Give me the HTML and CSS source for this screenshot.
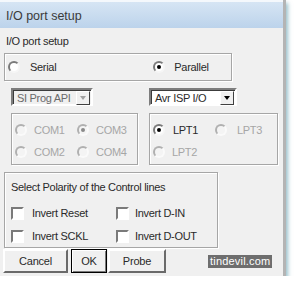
FILE: index.html
```html
<!DOCTYPE html>
<html lang="en">
<head>
  <meta charset="UTF-8" />
  <title>I/O port setup</title>
  <link rel="stylesheet" href="styles.css">
</head>
<body>
  <div class="window">
    <div class="titlebar">I/O port setup</div>

    <div class="label">I/O port setup</div>

    <div class="group mode">
      <label class="opt serial"><span class="radio"></span>Serial</label>
      <label class="opt parallel"><span class="radio on"></span>Parallel</label>
    </div>

    <div class="combos">
      <div class="combo disabled combo-prog">
        <span class="combo-text">SI Prog API</span>
        <span class="combo-btn"><span class="arrow"></span></span>
      </div>
      <div class="combo combo-isp">
        <span class="combo-text">Avr ISP I/O</span>
        <span class="combo-btn"><span class="arrow"></span></span>
      </div>
    </div>

    <div class="ports">
      <div class="group port-grid disabled">
        <label class="opt"><span class="radio"></span>COM1</label>
        <label class="opt"><span class="radio on"></span>COM3</label>
        <label class="opt"><span class="radio"></span>COM2</label>
        <label class="opt"><span class="radio"></span>COM4</label>
      </div>
      <div class="group port-grid lpt">
        <label class="opt"><span class="radio on"></span>LPT1</label>
        <label class="opt dim"><span class="radio"></span>LPT3</label>
        <label class="opt dim"><span class="radio"></span>LPT2</label>
      </div>
    </div>

    <div class="group polarity">
      <div class="polarity-title">Select Polarity of the Control lines</div>
      <div class="checks">
        <label class="chk"><span class="box"></span>Invert Reset</label>
        <label class="chk"><span class="box"></span>Invert D-IN</label>
        <label class="chk"><span class="box"></span>Invert SCKL</label>
        <label class="chk"><span class="box"></span>Invert D-OUT</label>
      </div>
    </div>

    <div class="buttons">
      <button class="btn cancel">Cancel</button>
      <button class="btn ok">OK</button>
      <button class="btn probe">Probe</button>
      <span class="watermark">tindevil.com</span>
    </div>
  </div>
</body>
</html>
```

FILE: styles.css
```css
* { box-sizing: border-box; }
body {
  margin: 0;
  background: #fff;
  font-family: "Liberation Sans", Arial, sans-serif;
  font-size: 11px;
  letter-spacing: -0.3px;
  color: #2a2a2a;
}
.window {
  width: 286px; height: 276px;
  background: #f0f0f0;
  border-right: 3px solid #b4b4b4;
  box-shadow: 2px 3px 4px rgba(70, 140, 160, 0.55);
  display: flex; flex-direction: column;
}
.titlebar {
  height: 28px;
  padding-left: 6px;
  line-height: 28px;
  font-size: 12.5px;
  letter-spacing: 0;
  color: #3a3a3a;
  background: linear-gradient(#d6e5f4, #bcd3eb);
  border-top: 2px solid #f4f8fc;
}
.label { margin: 7px 0 0 6px; height: 12px; line-height: 12px; }

.group {
  border: 1px solid #a6a6a6;
  box-shadow: inset 1px 1px #fff, 1px 1px #fff;
}
.mode {
  margin: 6px 0 0 4px;
  width: 228px; height: 28px;
  display: flex; align-items: center;
  padding-left: 3px;
}
.opt { display: flex; align-items: center; height: 14px; }
.radio {
  width: 12px; height: 12px;
  border-radius: 50%;
  background: #fff;
  border: 2px solid;
  border-color: #7a7a7a #f6f6f6 #f6f6f6 #7a7a7a;
  display: flex; align-items: center; justify-content: center;
  flex: none;
}
.radio.on::after {
  content: "";
  width: 4px; height: 4px;
  border-radius: 50%;
  background: #000;
}
.serial .radio { margin-right: 10px; }
.parallel { margin-left: 97px; }
.parallel .radio { margin-right: 9px; }

.combos { display: flex; margin-top: 7px; height: 18px; }
.combo {
  display: flex; align-items: center;
  height: 18px;
  background: #fff;
  border: 2px solid;
  border-color: #7d7d7d #fff #fff #7d7d7d;
  box-shadow: inset 1px 1px #3c3c3c;
  padding: 1px 1px 0 4px;
}
.combo-text { flex: 1; }
.combo-prog { margin-left: 11px; width: 82px; }
.combo-isp { margin-left: 56px; width: 88px; }
.combo.disabled { background: #f0f0f0; color: #6a6a6a; }
.combo-btn {
  width: 14px; height: 14px;
  background: #f0f0f0;
  border: 1px solid;
  border-color: #fff #404040 #404040 #fff;
  display: flex; align-items: center; justify-content: center;
}
.arrow {
  border-left: 3.5px solid transparent;
  border-right: 3.5px solid transparent;
  border-top: 4px solid #000;
}
.disabled .arrow { border-top-color: #a0a0a0; }

.ports { display: flex; margin-top: 7px; }
.port-grid {
  width: 127px; height: 52px;
  margin-left: 11px;
  padding: 9px 0 0 3px;
  display: grid;
  grid-template-columns: 62px auto;
  row-gap: 8px;
  align-content: start;
}
.port-grid .radio { margin-right: 7px; }
.port-grid.lpt { width: 129px; }
.lpt .opt:first-child .radio { margin-right: 8px; }
.lpt .opt:nth-child(2) .radio { margin-right: 10px; }
.disabled .opt, .opt.dim { color: #a6a6a6; }
.disabled .radio, .dim .radio { border-color: #b0b0b0 #fafafa #fafafa #b0b0b0; background: #f4f4f4; }
.disabled .radio.on::after { background: #8a8a8a; }

.polarity {
  margin: 7px 0 0 4px;
  width: 214px; height: 76px;
  padding: 8px 0 0 6px;
}
.polarity-title { height: 12px; line-height: 12px; }
.checks {
  margin-top: 13px;
  display: grid;
  grid-template-columns: 105px auto;
  row-gap: 9px;
}
.chk { display: flex; align-items: center; height: 14px; }
.box {
  width: 13px; height: 13px;
  background: #fff;
  border: 2px solid;
  border-color: #7a7a7a #fff #fff #7a7a7a;
  margin-right: 8px;
  flex: none;
}
.checks .chk:nth-child(2n) .box { margin-right: 6px; }

.buttons { display: flex; align-items: center; margin-top: 1px; height: 24px; }
.btn {
  height: 24px;
  font: inherit;
  letter-spacing: -0.2px;
  color: #2a2a2a;
  background: #f0f0f0;
  border: 2px solid;
  border-color: #fff #6a6a6a #6a6a6a #fff;
  padding: 0;
}
.cancel { margin-left: 3px; width: 65px; }
.ok {
  margin-left: 3px; width: 36px;
  border: 1px solid #000;
  box-shadow: inset 1px 1px #fff, inset -1px -1px #7a7a7a;
}
.probe { margin-left: 1px; width: 58px; }
.watermark {
  margin-left: 42px;
  padding: 0 2px;
  height: 13px; line-height: 13px;
  background: #6e6e6e;
  color: #fff;
  letter-spacing: 0.2px;
}
```
